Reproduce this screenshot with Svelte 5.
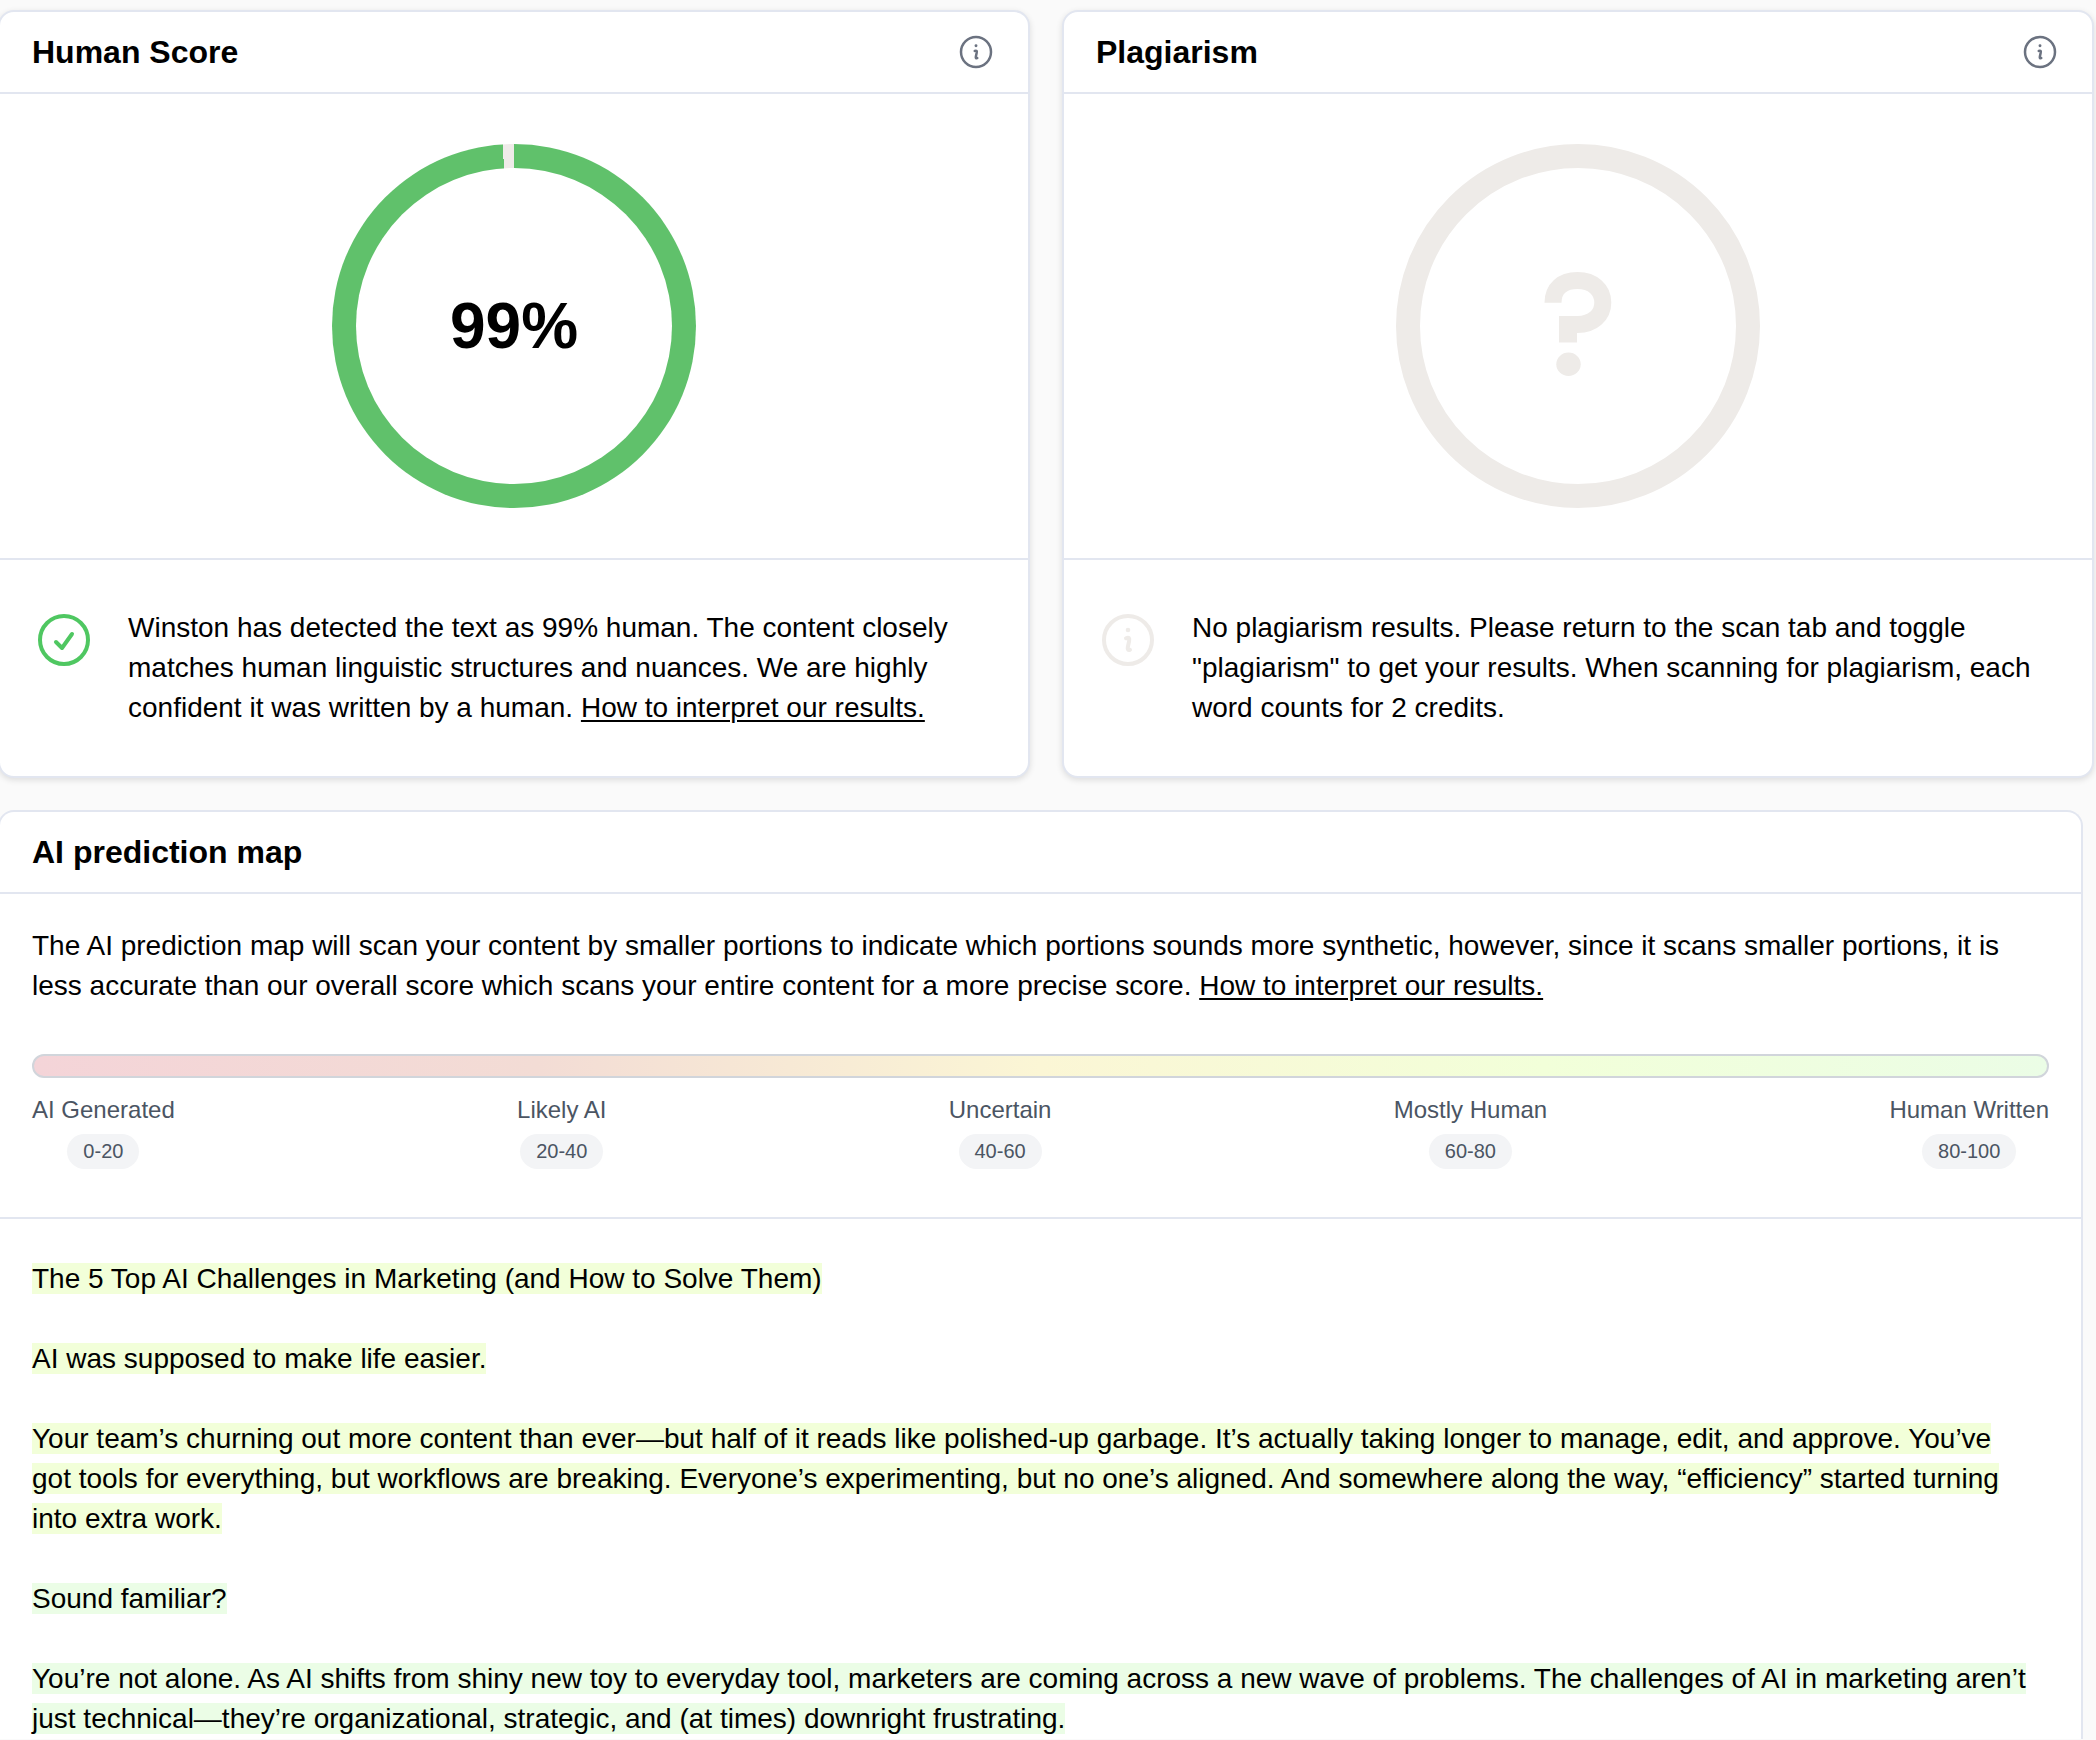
<script>
  const score = 99;

  const levels = [
    { label: 'AI Generated', range: '0-20' },
    { label: 'Likely AI', range: '20-40' },
    { label: 'Uncertain', range: '40-60' },
    { label: 'Mostly Human', range: '60-80' },
    { label: 'Human Written', range: '80-100' }
  ];

  const passages = [
    { tone: 'mostly', text: 'The 5 Top AI Challenges in Marketing (and How to Solve Them)' },
    { tone: 'mostly', text: 'AI was supposed to make life easier.' },
    {
      tone: 'mostly',
      text: 'Your team’s churning out more content than ever—but half of it reads like polished-up garbage. It’s actually taking longer to manage, edit, and approve. You’ve got tools for everything, but workflows are breaking. Everyone’s experimenting, but no one’s aligned. And somewhere along the way, “efficiency” started turning into extra work.'
    },
    { tone: 'human', text: 'Sound familiar?' },
    {
      tone: 'human',
      text: 'You’re not alone. As AI shifts from shiny new toy to everyday tool, marketers are coming across a new wave of problems. The challenges of AI in marketing aren’t just technical—they’re organizational, strategic, and (at times) downright frustrating.'
    }
  ];
</script>

{#snippet infoMark()}
  <circle cx="32" cy="32" r="24" />
  <path d="M30 30.300c3-1.200 3.800 0 3.100 3l-1.300 5.800c-.6 2.800.4 3.200 2.200 2.700" />
  <circle class="dot" cx="32" cy="22" r="2.300" />
{/snippet}

<main>
  <div class="scores">
    <section class="card">
      <header>
        <h2>Human Score</h2>
        <button type="button" aria-label="About the human score">
          <svg class="info" viewBox="0 0 64 64" aria-hidden="true">{@render infoMark()}</svg>
        </button>
      </header>
      <div class="chart">
        <div class="ring" style="--score: {score}%">
          <div class="hole">{score}%</div>
        </div>
      </div>
      <div class="summary">
        <svg class="check" viewBox="0 0 64 64" aria-hidden="true">
          <circle cx="32" cy="32" r="24" />
          <path d="M24 34l6 6L40 26" />
        </svg>
        <p>
          Winston has detected the text as 99% human. The content closely matches human linguistic
          structures and nuances. We are highly confident it was written by a human.
          <a href="#interpret">How to interpret our results.</a>
        </p>
      </div>
    </section>

    <section class="card">
      <header>
        <h2>Plagiarism</h2>
        <button type="button" aria-label="About plagiarism">
          <svg class="info" viewBox="0 0 64 64" aria-hidden="true">{@render infoMark()}</svg>
        </button>
      </header>
      <div class="chart">
        <svg class="unknown" viewBox="0 0 364 364" role="img" aria-label="No result">
          <circle cx="182" cy="182" r="170" stroke-width="24" />
          <path
            stroke-width="17"
            d="M157 158.700C157 145 166 136.500 181.500 136.500S206.800 146 206.800 158.500S197 180.500 181.500 180.500H163"
          />
          <path stroke-width="18" d="M172 174V198.500" />
          <ellipse class="dot" cx="172.500" cy="220.300" rx="12.200" ry="11.700" />
        </svg>
      </div>
      <div class="summary">
        <svg class="muted" viewBox="0 0 64 64" aria-hidden="true">{@render infoMark()}</svg>
        <p>
          No plagiarism results. Please return to the scan tab and toggle "plagiarism" to get your
          results. When scanning for plagiarism, each word counts for 2 credits.
        </p>
      </div>
    </section>
  </div>

  <section class="card map">
    <header><h2>AI prediction map</h2></header>
    <div class="legend">
      <p>
        The AI prediction map will scan your content by smaller portions to indicate which portions
        sounds more synthetic, however, since it scans smaller portions, it is less accurate than our
        overall score which scans your entire content for a more precise score.
        <a href="#interpret-map">How to interpret our results.</a>
      </p>
      <div class="scale"></div>
      <ul>
        {#each levels as level}
          <li>
            <span class="label">{level.label}</span>
            <span class="chip">{level.range}</span>
          </li>
        {/each}
      </ul>
    </div>
    <article>
      {#each passages as passage}
        <p><mark class={passage.tone}>{passage.text}</mark></p>
      {/each}
    </article>
  </section>
</main>

<style>
  :global(body) {
    margin: 0;
    background: #fafafa;
    overflow-x: hidden;
  }

  main {
    display: flex;
    flex-direction: column;
    gap: 32px;
    margin-left: -2px;
    padding: 10px 2px 0 0;
    font: 28px/40px 'Liberation Sans', Arial, sans-serif;
    color: #000;
  }

  .scores {
    display: grid;
    grid-template-columns: 1fr 1fr;
    gap: 32px;
  }

  .card {
    background: #fff;
    border: 2px solid #e2e6f0;
    border-radius: 16px;
    box-shadow: 0 2px 6px rgb(0 0 0 / 12%);
  }

  .map {
    margin-right: 11px;
    border-bottom: 0;
    border-radius: 16px 16px 0 0;
    box-shadow: none;
  }

  header {
    display: flex;
    align-items: center;
    justify-content: space-between;
    height: 80px;
    padding: 0 32px;
    border-bottom: 2px solid #e2e6f0;
  }

  h2,
  p,
  ul {
    margin: 0;
    padding: 0;
  }

  h2 {
    font-size: 32px;
    line-height: 40px;
  }

  button {
    display: flex;
    padding: 0;
    border: 0;
    background: none;
    cursor: pointer;
  }

  svg {
    flex: none;
    fill: none;
    stroke-linecap: round;
    stroke-linejoin: round;
  }

  .dot {
    stroke: none;
  }

  .info {
    width: 40px;
    height: 40px;
    stroke: #6b7280;
    stroke-width: 4;
  }

  .info .dot {
    fill: #6b7280;
  }

  .chart {
    display: flex;
    justify-content: center;
    padding: 50px 0;
    border-bottom: 2px solid #e2e6f0;
  }

  .ring {
    display: grid;
    box-sizing: border-box;
    width: 364px;
    height: 364px;
    padding: 24px;
    border-radius: 50%;
    background: conic-gradient(#60c16b var(--score), #efebe9 0);
  }

  .hole {
    display: grid;
    place-items: center;
    border-radius: 50%;
    background: #fff;
    font-size: 64px;
    font-weight: 700;
  }

  .unknown {
    width: 364px;
    height: 364px;
    stroke: #eeebe8;
    stroke-linecap: butt;
  }

  .unknown .dot {
    fill: #eeebe8;
  }

  .summary {
    display: flex;
    gap: 32px;
    padding: 48px 32px;
  }

  .check,
  .muted {
    width: 64px;
    height: 64px;
    stroke-width: 4;
  }

  .check {
    stroke: #4fc761;
  }

  .muted {
    stroke: #eeebe8;
  }

  .muted .dot {
    fill: #eeebe8;
  }

  a {
    color: inherit;
    text-decoration-thickness: 2px;
    text-underline-offset: 3px;
  }

  .legend {
    padding: 32px 32px 48px;
    border-bottom: 2px solid #e2e6f0;
  }

  .scale {
    box-sizing: border-box;
    height: 24px;
    margin: 48px 0 16px;
    border: 2px solid #d1d5db;
    border-radius: 12px;
    background: linear-gradient(90deg, #f4d4d8, #f3dcd5 25%, #fbf6d5 50%, #f2ffd9 75%, #ebfde6);
  }

  ul {
    display: flex;
    justify-content: space-between;
    list-style: none;
    color: #4b5563;
  }

  li {
    display: flex;
    flex-direction: column;
    align-items: center;
    gap: 8px;
  }

  .label {
    font-size: 24px;
    line-height: 32px;
  }

  .chip {
    padding: 4px 16px;
    border-radius: 18px;
    background: #f3f4f6;
    font-size: 20px;
    line-height: 27px;
  }

  article {
    display: flex;
    flex-direction: column;
    gap: 40px;
    padding: 40px 48px 0 32px;
  }

  mark {
    color: inherit;
  }

  .mostly {
    background: #f2ffd9;
  }

  .human {
    background: #ebfde6;
  }
</style>
